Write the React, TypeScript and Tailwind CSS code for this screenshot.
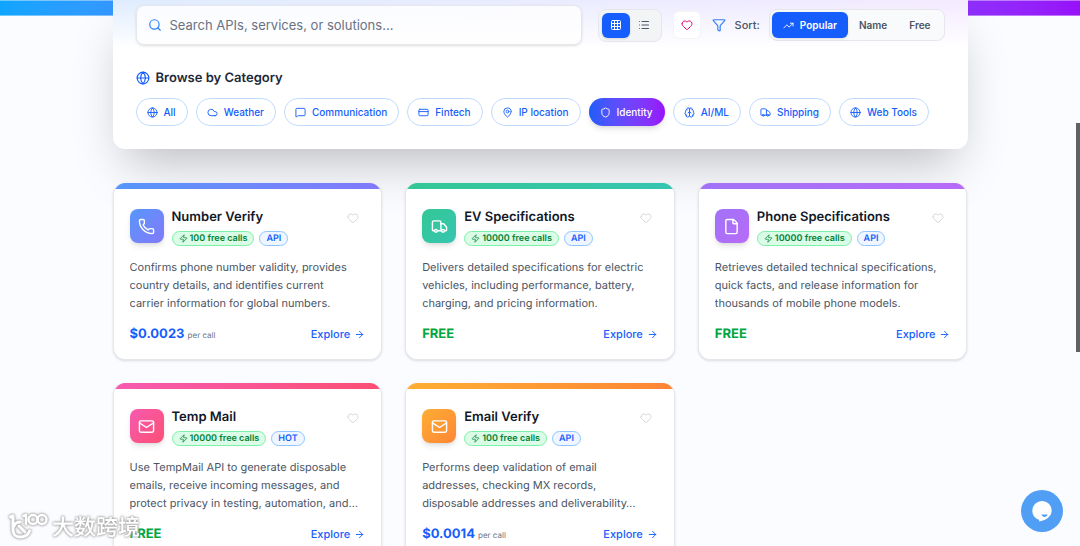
import { useState } from "react";
import {
  ArrowRight,
  Brain,
  Cloud,
  CreditCard,
  File,
  Funnel,
  Globe,
  Grid3x3,
  Heart,
  List,
  Mail,
  MapPin,
  MessageSquare,
  Phone,
  Search,
  Shield,
  TrendingUp,
  Truck,
  Zap,
  type LucideIcon,
} from "lucide-react";

type Category = {
  name: string;
  icon: LucideIcon;
};

type Api = {
  name: string;
  icon: LucideIcon;
  gradient: string;
  freeCalls: number;
  tag: string;
  description: string;
  price: string | null;
};

const categories: Category[] = [
  { name: "All", icon: Globe },
  { name: "Weather", icon: Cloud },
  { name: "Communication", icon: MessageSquare },
  { name: "Fintech", icon: CreditCard },
  { name: "IP location", icon: MapPin },
  { name: "Identity", icon: Shield },
  { name: "AI/ML", icon: Brain },
  { name: "Shipping", icon: Truck },
  { name: "Web Tools", icon: Globe },
];

const apis: Api[] = [
  {
    name: "Number Verify",
    icon: Phone,
    gradient: "from-[#5596fa] to-[#8079fa]",
    freeCalls: 100,
    tag: "API",
    description:
      "Confirms phone number validity, provides country details, and identifies current carrier information for global numbers.",
    price: "$0.0023",
  },
  {
    name: "EV Specifications",
    icon: Truck,
    gradient: "from-[#34c795] to-[#36c5b0]",
    freeCalls: 10000,
    tag: "API",
    description:
      "Delivers detailed specifications for electric vehicles, including performance, battery, charging, and pricing information.",
    price: null,
  },
  {
    name: "Phone Specifications",
    icon: File,
    gradient: "from-[#a173f7] to-[#b76bf8]",
    freeCalls: 10000,
    tag: "API",
    description:
      "Retrieves detailed technical specifications, quick facts, and release information for thousands of mobile phone models.",
    price: null,
  },
  {
    name: "Temp Mail",
    icon: Mail,
    gradient: "from-[#f75ab0] to-[#fb4f73]",
    freeCalls: 10000,
    tag: "HOT",
    description:
      "Use TempMail API to generate disposable emails, receive incoming messages, and protect privacy in testing, automation, and…",
    price: null,
  },
  {
    name: "Email Verify",
    icon: Mail,
    gradient: "from-[#fdae33] to-[#fd8535]",
    freeCalls: 100,
    tag: "API",
    description:
      "Performs deep validation of email addresses, checking MX records, disposable addresses and deliverability…",
    price: "$0.0014",
  },
];

const sorts = ["Popular", "Name", "Free"];

function ApiCard({ api }: { api: Api }) {
  const Icon = api.icon;

  return (
    <article className="overflow-hidden rounded-xl border border-t-0 border-gray-200 bg-white shadow-sm">
      <div className={`h-1.5 bg-linear-to-r ${api.gradient}`} />
      <div className="px-4 pt-5 pb-[14px]">
        <div className="flex items-start gap-2">
          <div
            className={`flex size-[34px] shrink-0 items-center justify-center rounded-lg bg-linear-to-br text-white shadow-md ${api.gradient}`}
          >
            <Icon size={17} />
          </div>
          <div className="min-w-0 flex-1">
            <h3 className="text-[13px] leading-4 font-semibold text-gray-900">{api.name}</h3>
            <div className="mt-1.5 flex items-center gap-[5px]">
              <span className="flex h-[15px] items-center gap-0.5 rounded-full border border-green-300 bg-green-100 px-1.5 text-[9px] font-semibold text-green-700">
                <Zap size={9} />
                {api.freeCalls} free calls
              </span>
              <span className="flex h-[15px] items-center rounded-full border border-blue-300 bg-blue-50 px-1.5 text-[9px] font-semibold text-blue-600">
                {api.tag}
              </span>
            </div>
          </div>
          <button type="button" aria-label={`Save ${api.name}`} className="px-1.5 py-[3px] text-gray-300">
            <Heart size={12} />
          </button>
        </div>
        <p className="mt-3 line-clamp-3 pr-1.5 text-[11px] leading-[18px] text-gray-600">{api.description}</p>
        <div className="mt-3 flex items-center justify-between">
          {api.price ? (
            <p className="text-[13px] leading-5 font-bold text-blue-600">
              {api.price} <span className="text-[8px] font-normal text-gray-500">per call</span>
            </p>
          ) : (
            <p className="text-[13px] leading-5 font-bold text-green-600">FREE</p>
          )}
          <a href="#explore" className="flex items-center gap-1 text-[11px] font-medium text-blue-600">
            Explore
            <ArrowRight size={11} />
          </a>
        </div>
      </div>
    </article>
  );
}

export default function App() {
  const [category, setCategory] = useState("Identity");
  const [sort, setSort] = useState("Popular");
  const [query, setQuery] = useState("");

  return (
    <div className="h-screen overflow-y-auto bg-[#fbfcff] font-['Inter',sans-serif] [scrollbar-width:none] [text-rendering:geometricPrecision]">
      <div className="-mb-4 h-4 border-y border-white/40 bg-linear-to-r from-[#0ea5ff] via-[#6062ff] to-[#9810fa]" />

      <main className="mx-auto max-w-[855px]">
        <section className="relative rounded-b-xl bg-white bg-linear-to-r from-blue-100 to-purple-100 shadow-2xl">
          <div className="rounded-b-xl bg-linear-to-b from-white/10 to-white to-[48px] px-[23px] pt-[5px] pb-[23px]">
            <div className="flex items-center">
              <div className="flex h-10 flex-1 items-center gap-2 rounded-lg border border-gray-200 bg-white/80 px-[11px] shadow-sm">
                <Search size={14} className="shrink-0 text-blue-500" />
                <input
                  type="text"
                  aria-label="Search APIs"
                  value={query}
                  onChange={(e) => setQuery(e.target.value)}
                  placeholder="Search APIs, services, or solutions..."
                  className="h-5 w-full bg-transparent text-[13px] text-gray-800 outline-none placeholder:text-gray-500"
                />
              </div>

              <div className="ml-4 flex rounded-lg border border-gray-200 bg-gray-100 p-[3px]">
                <button
                  type="button"
                  aria-label="Grid view"
                  className="flex h-[25px] w-7 items-center justify-center rounded-md bg-[#155dfc] text-white shadow-sm"
                >
                  <Grid3x3 size={12} />
                </button>
                <button
                  type="button"
                  aria-label="List view"
                  className="flex h-[25px] w-7 items-center justify-center text-gray-600"
                >
                  <List size={12} />
                </button>
              </div>

              <button
                type="button"
                aria-label="Favorites"
                className="ml-[11px] flex size-7 items-center justify-center rounded-md border border-gray-100 bg-white text-pink-600"
              >
                <Heart size={12} />
              </button>

              <Funnel size={14} className="ml-[11px] text-blue-500" />
              <span className="ml-[9px] text-[11px] font-medium text-gray-600">Sort:</span>

              <div className="ml-[9px] flex rounded-lg border border-gray-200 bg-gray-50 p-[2px]">
                {sorts.map((name) => (
                  <button
                    key={name}
                    type="button"
                    onClick={() => setSort(name)}
                    className={`flex h-[26px] items-center gap-1.5 rounded-md px-[11px] text-[10px] font-semibold ${
                      sort === name ? "bg-[#155dfc] text-white shadow-sm" : "text-gray-600"
                    }`}
                  >
                    {name === "Popular" && <TrendingUp size={11} />}
                    {name}
                  </button>
                ))}
              </div>
            </div>

            <h2 className="mt-[23px] flex items-center gap-1.5 text-[13px] leading-5 font-semibold text-gray-800">
              <Globe size={14} className="text-blue-600" />
              Browse by Category
            </h2>

            <div className="mt-2.5 flex flex-wrap gap-2">
              {categories.map(({ name, icon: Icon }) => (
                <button
                  key={name}
                  type="button"
                  onClick={() => setCategory(name)}
                  className={`flex h-7 items-center gap-1.5 rounded-full border pr-[11px] pl-2.5 text-[10px] font-medium ${
                    category === name
                      ? "border-transparent bg-linear-to-r from-[#155dfc] to-[#9810fa] bg-origin-border text-white shadow-md"
                      : "border-blue-200 bg-white text-blue-600"
                  }`}
                >
                  <Icon size={11} />
                  {name}
                </button>
              ))}
            </div>
          </div>
        </section>

        <section className="relative mt-[34px] grid grid-cols-3 gap-[23px] pb-8">
          {apis.map((api) => (
            <ApiCard key={api.name} api={api} />
          ))}
        </section>
      </main>

      <div className="fixed top-[123px] right-0 h-[229px] w-1 bg-[#606164]" />

      <button
        type="button"
        aria-label="Open chat"
        className="fixed right-[17px] bottom-[14px] flex size-[42px] items-center justify-center rounded-full bg-[#519ff5]"
      >
        <svg width="22" height="22" viewBox="0 0 22 22" fill="none">
          <path d="M11 1a9.6 9.6 0 0 1 9.7 9.6c0 5-4.3 8.6-8.2 9.700-1.500.6-3 1-4.200 1.300l-.2-1.900C4 18.600 1.300 15 1.300 10.700A9.700 9.700 0 0 1 11 1Z" fill="#fff" />
          <path d="M10.300 14.600h6.500c-.7 1.500-1.800 2.300-3.200 2.300s-2.700-.8-3.300-2.300Z" fill="#519ff5" />
        </svg>
      </button>

      <div className="fixed bottom-[6px] left-2 flex items-center gap-1 text-white [filter:drop-shadow(0_0_1px_#999)_drop-shadow(0_0_1px_#bbb)]">
        <svg width="40" height="28" viewBox="0 0 40 28" fill="none" stroke="currentColor" strokeWidth="2.5" strokeLinecap="round" strokeLinejoin="round">
          <path d="M2.500 5 5 4v14c0 4 2.500 7 7 7 4.500 0 8-2 9.500-6" strokeWidth="3" />
          <path d="M12 10c-2.500 0-5 1.500-6 4M11 14l6 6" strokeWidth="3" />
          <path d="M15.500 4 18 3v9" />
          <circle cx="25" cy="7.500" r="4.500" />
          <circle cx="34" cy="7.500" r="4.500" />
        </svg>
        <span className="font-['Noto_Sans_CJK_SC',sans-serif] text-[22px] leading-7 font-medium">大数跨境</span>
      </div>
    </div>
  );
}
